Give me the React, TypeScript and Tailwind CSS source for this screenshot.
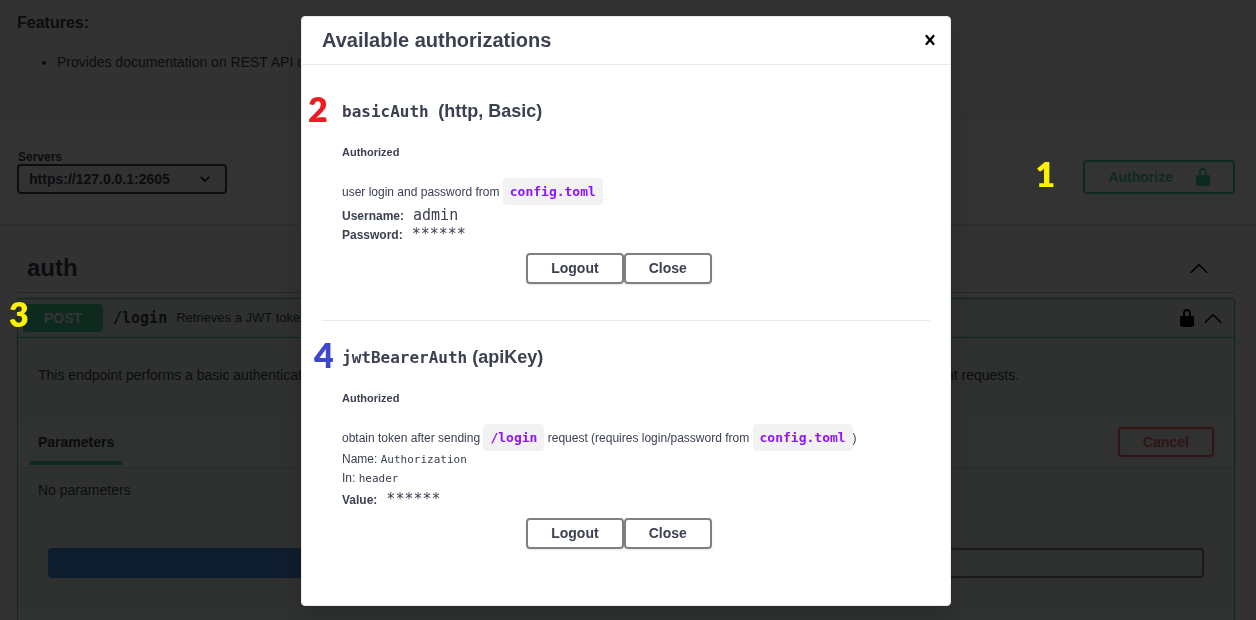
import { useState, type ReactNode } from "react";

type IconProps = { className?: string };

function LockIcon({ className }: IconProps) {
  return (
    <svg viewBox="0 0 20 20" className={className} fill="currentColor" aria-hidden="true">
      <path d="M15.8 8H14V5.6C14 2.703 12.665 1 10 1 7.334 1 6 2.703 6 5.6V8H4c-.553 0-1 .646-1 1.199V17c0 .549.428 1.139.951 1.307l1.197.387C5.672 18.861 6.55 19 7.1 19h5.8c.549 0 1.428-.139 1.951-.307l1.196-.387c.524-.167.953-.757.953-1.306V9.199C17 8.646 16.352 8 15.8 8zM12 8H8V5.199C8 3.754 8.797 3 10 3c1.203 0 2 .754 2 2.199V8z" />
    </svg>
  );
}

function ChevronUpIcon({ className }: IconProps) {
  return (
    <svg viewBox="0 0 20 20" className={className} fill="currentColor" aria-hidden="true">
      <path d="M17.418 14.908c.272.268.709.268.979 0s.271-.701 0-.969l-7.908-7.83c-.27-.268-.707-.268-.979 0l-7.908 7.83c-.27.268-.27.701 0 .969.271.268.709.268.979 0L10 7.767l7.418 7.141z" />
    </svg>
  );
}

function SelectArrowIcon({ className }: IconProps) {
  return (
    <svg viewBox="0 0 20 20" className={className} fill="currentColor" aria-hidden="true">
      <path d="M13.418 7.859a.695.695 0 01.978 0 .68.68 0 010 .969l-3.908 3.83a.697.697 0 01-.979 0l-3.908-3.83a.68.68 0 010-.969.695.695 0 01.978 0L10 11l3.418-3.141z" />
    </svg>
  );
}

function CloseIcon({ className }: IconProps) {
  return (
    <svg viewBox="0 0 20 20" className={className} fill="currentColor" aria-hidden="true">
      <path d="M14.348 14.849c-.469.469-1.229.469-1.697 0L10 11.819l-2.651 3.029c-.469.469-1.229.469-1.697 0-.469-.469-.469-1.229 0-1.697l2.758-3.15-2.759-3.152c-.469-.469-.469-1.228 0-1.697.469-.469 1.228-.469 1.697 0L10 8.183l2.651-3.031c.469-.469 1.228-.469 1.697 0 .469.469.469 1.229 0 1.697l-2.758 3.152 2.758 3.15c.469.469.469 1.229 0 1.698z" />
    </svg>
  );
}

function StepNumber({ className, children }: { className: string; children: ReactNode }) {
  return (
    <span className={`absolute font-['Lato',sans-serif] text-[34px] leading-[34px] font-extrabold ${className}`}>
      {children}
    </span>
  );
}

function Mono({ className, children }: { className: string; children: ReactNode }) {
  return <code className={`font-['DejaVu_Sans_Mono',monospace] leading-none ${className}`}>{children}</code>;
}

function InlineCode({ children }: { children: ReactNode }) {
  return (
    <Mono className="rounded bg-black/5 px-[7px] py-[6px] text-[13px] font-semibold text-[#9012fe]">{children}</Mono>
  );
}

function ModalButton({ children, onClick }: { children: ReactNode; onClick?: () => void }) {
  return (
    <button
      type="button"
      onClick={onClick}
      className="h-[31px] rounded border-2 border-[#808080] px-[23px] pb-px text-sm font-bold shadow-[0_1px_2px_rgba(0,0,0,0.1)]"
    >
      {children}
    </button>
  );
}

function Credential({ label, value }: { label: string; value: string }) {
  return (
    <div className="flex h-[19px] items-center gap-[9px] leading-4">
      <dt className="font-bold">{label}</dt>
      <dd className="flex">
        <Mono className="text-[15px]">{value}</Mono>
      </dd>
    </div>
  );
}

function AuthSection({
  title,
  onClose,
  children,
}: {
  title: ReactNode;
  onClose: () => void;
  children: ReactNode;
}) {
  return (
    <section className="px-5">
      <h4 className="relative text-lg leading-6 font-bold whitespace-pre">{title}</h4>
      <h6 className="mt-[21px] text-[11px] leading-4 font-bold">Authorized</h6>
      <div className="mt-[19px] text-xs">{children}</div>
      <div className="mt-[9px] flex justify-center pr-[14px]">
        <ModalButton>Logout</ModalButton>
        <ModalButton onClick={onClose}>Close</ModalButton>
      </div>
    </section>
  );
}

function AuthorizationsModal({ onClose }: { onClose: () => void }) {
  return (
    <div className="fixed inset-0 z-10 flex items-start justify-center bg-black/80 pt-4 pr-1">
      <div
        role="dialog"
        aria-modal="true"
        aria-labelledby="auth-title"
        className="w-full max-w-[650px] rounded border border-[#ebebeb] bg-white pb-14 shadow-[0_10px_30px_rgba(0,0,0,0.2)]"
      >
        <header className="flex h-12 items-center justify-between border-b border-[#ebebeb] pr-[10px] pb-px pl-5">
          <h3 id="auth-title" className="text-xl leading-6 font-bold">
            Available authorizations
          </h3>
          <button type="button" aria-label="Close dialog" onClick={onClose} className="text-black">
            <CloseIcon className="size-5" />
          </button>
        </header>
        <div className="px-5 pt-[34px]">
          <AuthSection
            onClose={onClose}
            title={
              <>
                <StepNumber className="top-[-7px] -left-[34px] text-[#ed1c24]">2</StepNumber>
                <Mono className="text-base">basicAuth </Mono>(http, Basic)
              </>
            }
          >
            <p className="leading-[26px]">
              user login and password from <InlineCode>config.toml</InlineCode>
            </p>
            <dl className="pt-px">
              <Credential label="Username:" value="admin" />
              <Credential label="Password:" value="******" />
            </dl>
          </AuthSection>
          <hr className="mt-9 mb-6 border-[#ebebeb]" />
          <AuthSection
            onClose={onClose}
            title={
              <>
                <StepNumber className="top-[-7px] -left-[28px] text-[#3f48cc]">4</StepNumber>
                <Mono className="text-base">jwtBearerAuth</Mono> (apiKey)
              </>
            }
          >
            <p className="leading-[26px]">
              obtain token after sending <InlineCode>/login</InlineCode> request (requires login/password from{" "}
              <InlineCode>config.toml</InlineCode>)
            </p>
            <p className="h-[19px] leading-4">
              Name: <Mono className="text-[11px]">Authorization</Mono>
            </p>
            <p className="h-[19px] leading-4">
              In: <Mono className="text-[11px]">header</Mono>
            </p>
            <dl className="pt-px">
              <Credential label="Value:" value="******" />
            </dl>
          </AuthSection>
        </div>
      </div>
    </div>
  );
}

export default function App() {
  const [open, setOpen] = useState(true);
  return (
    <div className="h-screen overflow-hidden bg-[#fafafa] font-['Liberation_Sans',Arial,sans-serif] text-[#3b4151]">
      <section className="border-b border-[#f0f0f0] pt-[11px] pr-[21px] pb-[47px] pl-[17px]">
        <h2 className="text-base leading-6 font-bold">Features:</h2>
        <ul className="mt-[17px] list-disc pl-10 text-sm leading-5">
          <li>Provides documentation on REST API calls</li>
        </ul>
      </section>

      <section className="flex items-end justify-between bg-white py-[30px] pr-[21px] pl-[17px] shadow-[0_1px_2px_rgba(0,0,0,0.15)]">
        <div>
          <label htmlFor="servers" className="block pl-px text-xs leading-[14px] font-bold">
            Servers
          </label>
          <div className="relative w-[210px]">
            <select
              id="servers"
              className="block h-[30px] w-full appearance-none rounded border-2 border-[#41444e] bg-[#f7f7f7] pr-10 pl-[10px] text-sm font-bold"
            >
              <option>https://127.0.0.1:2605</option>
            </select>
            <SelectArrowIcon className="pointer-events-none absolute top-[5px] right-3 size-5 text-black" />
          </div>
        </div>
        <button
          type="button"
          onClick={() => setOpen(true)}
          className="relative flex h-[34px] items-center gap-5 rounded border-2 border-[#49cc90] pr-5 pl-[23px] text-sm font-bold text-[#49cc90]"
        >
          <StepNumber className="top-[-5px] -left-[50px] z-20 text-[#fff200]">1</StepNumber>
          Authorize
          <LockIcon className="size-5" />
        </button>
      </section>

      <main className="pr-[21px] pl-[17px]">
        <div className="mt-5 flex h-[49px] items-center justify-between border-b border-[#3b4151]/30 pr-[26px] pl-[10px]">
          <h3 className="text-2xl font-bold">auth</h3>
          <button type="button" aria-label="Collapse auth" className="text-black">
            <ChevronUpIcon className="size-5" />
          </button>
        </div>

        <article className="mt-[5px] rounded border border-[#49cc90] bg-[#49cc90]/10 shadow-[0_0_3px_rgba(0,0,0,0.19)]">
          <div className="relative flex items-center border-b border-[#49cc90] p-[5px] pr-[11px]">
            <StepNumber className="top-[-2px] -left-[9px] z-20 text-[#fff200]">3</StepNumber>
            <span className="flex h-7 w-20 items-center justify-center rounded bg-[#49cc90] text-sm font-bold text-white">
              POST
            </span>
            <Mono className="ml-[10px] text-[15px] font-semibold">/login</Mono>
            <span className="ml-[9px] text-[13px]">Retrieves a JWT token</span>
            <button type="button" aria-label="Authorization" className="ml-auto text-black">
              <LockIcon className="size-5" />
            </button>
            <button type="button" aria-label="Collapse POST /login" className="ml-[6px] text-black">
              <ChevronUpIcon className="size-5" />
            </button>
          </div>

          <p className="px-5 pt-[27px] pb-8 text-sm leading-5">
            This endpoint performs a basic authentication and, where the credentials are valid, returns a JWT token that
            can be used to authorize all subsequent requests.
          </p>

          <div className="flex h-[50px] items-center justify-between bg-white/20 pr-5 pl-3 shadow-[0_1px_2px_rgba(0,0,0,0.1)]">
            <div className="flex h-full flex-col justify-between pb-[2px]">
              <h4 className="px-2 pt-[15px] text-sm leading-5 font-bold">Parameters</h4>
              <div className="h-1 bg-[#49cc90]" />
            </div>
            <button
              type="button"
              className="h-[30px] rounded border-2 border-[#ff6060] px-[23px] text-sm font-bold text-[#ff6060] shadow-[0_1px_2px_rgba(0,0,0,0.1)]"
            >
              Cancel
            </button>
          </div>

          <p className="mt-[13px] px-5 text-sm leading-5">No parameters</p>

          <div className="mt-12 mb-[29px] flex px-[30px] text-sm font-bold">
            <button type="button" className="h-[30px] flex-1 rounded-l bg-[#4990e2] text-white">
              Execute
            </button>
            <button type="button" className="h-[30px] flex-1 rounded-r border-2 border-[#808080]">
              Clear
            </button>
          </div>

          <div className="h-[50px] bg-white/20" />
        </article>
      </main>

      {open && <AuthorizationsModal onClose={() => setOpen(false)} />}
    </div>
  );
}
